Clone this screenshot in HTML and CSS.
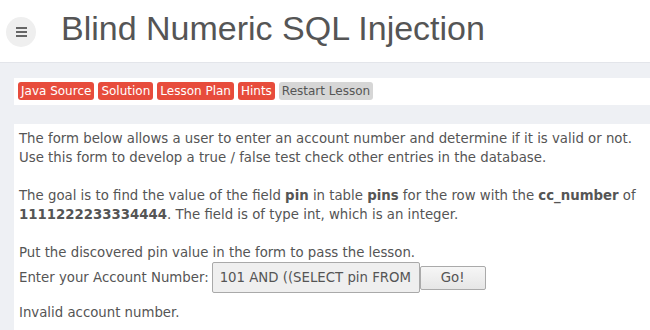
FILE: index.html
```html
<!DOCTYPE html>
<html lang="en">
<head>
  <meta charset="UTF-8">
  <title>Blind Numeric SQL Injection</title>
  <link rel="stylesheet" href="styles.css">
</head>
<body>
  <div class="page-header">
    <button class="menu-toggle" type="button">
      <span></span><span></span><span></span>
    </button>
    <h1>Blind Numeric SQL Injection</h1>
  </div>

  <div class="main-area">
    <div class="lesson-menu">
      <a class="lesson-btn">Java Source</a>
      <a class="lesson-btn">Solution</a>
      <a class="lesson-btn">Lesson Plan</a>
      <a class="lesson-btn">Hints</a>
      <a class="lesson-btn restart">Restart Lesson</a>
    </div>

    <div class="lesson-content">
      The form below allows a user to enter an account number and determine if it is valid or not.<br>
      Use this form to develop a true / false test check other entries in the database.<br>
      <br>
      The goal is to find the value of the field <b>pin</b> in table <b>pins</b> for the row with the <b>cc_number</b> of <b>1111222233334444</b>. The field is of type int, which is an integer.<br>
      <br>
      Put the discovered pin value in the form to pass the lesson.
      <form class="account-form">
        <label for="account">Enter your Account Number:</label>
        <input type="text" id="account" name="account_number" value="101 AND ((SELECT pin FROM pins WHERE cc_number='1111222233334444') > 1000);">
        <button type="submit" class="go-btn">Go!</button>
      </form>
      <p class="result">Invalid account number.</p>
    </div>
  </div>
</body>
</html>
```

FILE: styles.css
```css
body {
  margin: 0;
  font-family: 'DejaVu Sans', sans-serif;
  background: #eef0f4;
  color: #555;
  height: 100vh;
  display: flex;
  flex-direction: column;
  overflow: hidden;
}

.page-header {
  background: #fff;
  height: 62px;
  flex-shrink: 0;
  border-bottom: 1px solid #e3e5ea;
  display: flex;
  align-items: center;
  padding-left: 6px;
}

.menu-toggle {
  width: 30px;
  height: 30px;
  border-radius: 50%;
  border: none;
  background: #efefef;
  padding: 0;
  display: flex;
  flex-direction: column;
  justify-content: center;
  align-items: center;
  gap: 2px;
  margin-top: 1px;
}

.menu-toggle span {
  display: block;
  width: 11px;
  height: 2px;
  background: #666;
}

.page-header h1 {
  margin: 0 0 0 25px;
  font-family: 'Liberation Sans', Arial, sans-serif;
  font-weight: normal;
  font-size: 34px;
  color: #555;
  padding-bottom: 6px;
}

.main-area {
  flex: 1;
  min-height: 0;
  display: flex;
  flex-direction: column;
  padding: 15px 0 0 14px;
}

.lesson-menu {
  background: #fff;
  height: 18px;
  flex-shrink: 0;
  padding: 4px 4px 5px;
  display: flex;
  gap: 4px;
}

.lesson-btn {
  background: #e74c3c;
  color: #fff;
  font-size: 12px;
  line-height: 18px;
  padding: 0 3px;
  border-radius: 3px;
}

.lesson-btn.restart {
  background: #d6d6d6;
  color: #555;
}

.lesson-content {
  flex: 1;
  min-height: 0;
  overflow: hidden;
  background: #fff;
  margin-top: 19px;
  padding: 5px 5px 0;
  font-size: 13.3px;
  line-height: 19px;
}

.account-form {
  display: flex;
  align-items: center;
}

.account-form label {
  margin-right: 3px;
}

.account-form input {
  width: 208px;
  height: 31px;
  box-sizing: border-box;
  padding: 0 7px;
  border: 1px solid #a9a9a9;
  border-radius: 2px;
  background: #efefef;
  font-family: 'DejaVu Sans', sans-serif;
  font-size: 13.3px;
  color: #555;
}

.go-btn {
  width: 66px;
  height: 24px;
  border: 1px solid #aaa;
  border-radius: 2px;
  background: linear-gradient(#f6f6f6, #e6e6e6);
  font-family: 'DejaVu Sans', sans-serif;
  font-size: 13.3px;
  color: #555;
}

.result {
  margin: 10px 0 0 0;
}
```
